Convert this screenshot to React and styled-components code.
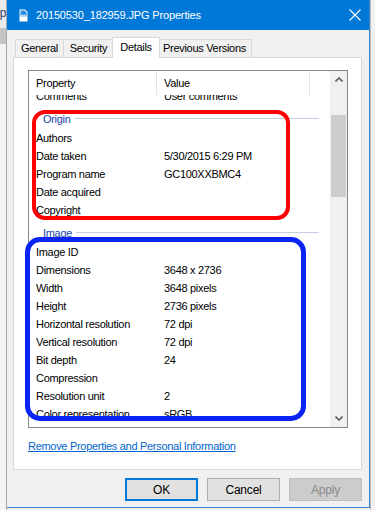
import React from "react";
import styled, { createGlobalStyle } from "styled-components";

const GlobalStyle = createGlobalStyle`
  body {
    margin: 0;
    background: #f0f0f0;
    font-family: "Liberation Sans", Arial, sans-serif;
    font-size: 11px;
    letter-spacing: -0.3px;
    color: #000;
  }
`;

const Screen = styled.div`
  display: flex;
  width: 375px;
  height: 510px;
  overflow: hidden;
`;

const Backdrop = styled.div`
  width: 7px;
  display: flex;
  flex-direction: column;
  border-right: 1px solid #a9a9a9;
  box-sizing: border-box;
`;

const BackdropTop = styled.div`
  height: 28px;
  background: #ebebeb;
  overflow: hidden;
  direction: rtl;
  font-size: 12px;
  line-height: 26px;
  color: #3b3b6e;
`;

const BackdropBar = styled.div`
  height: 16px;
  background: #c4c4c4;
`;

const BackdropRest = styled.div`
  flex: 1;
  background: #f4f4f4;
`;

const RightEdge = styled.div`
  flex: 1;
  background: #f2f2f2;
  border-left: 1px solid #b8b8b8;
`;

const Window = styled.div`
  width: 363px;
  height: 508px;
  box-sizing: border-box;
  border: 1px solid #3b87cf;
  border-top: none;
  border-left: none;
  display: flex;
  flex-direction: column;
  background: #f0f0f0;
`;

const TitleBar = styled.div`
  height: 30px;
  background: #0078d7;
  display: flex;
  align-items: center;
  padding: 0 8px 0 12px;
  color: #fff;
`;

const Title = styled.div`
  margin-left: 8px;
  flex: 1;
  font-size: 11px;
  letter-spacing: -0.15px;
`;

const Body = styled.div`
  flex: 1;
  display: flex;
  flex-direction: column;
  padding: 7px 7px 0 6px;
`;

const TabRow = styled.div`
  display: flex;
  align-items: flex-end;
  height: 20px;
  padding-left: 2px;
  position: relative;
  z-index: 1;
`;

const Tab = styled.div`
  box-sizing: border-box;
  width: ${(p) => p.$w}px;
  height: ${(p) => (p.$active ? 21 : 18)}px;
  margin: 0 ${(p) => (p.$active ? -2 : 0)}px ${(p) => (p.$active ? -1 : 0)}px
    ${(p) => (p.$active ? -2 : -1)}px;
  background: ${(p) => (p.$active ? "#fff" : "#f0f0f0")};
  border: 1px solid #d9d9d9;
  border-bottom: none;
  position: relative;
  z-index: ${(p) => (p.$active ? 2 : 1)};
  display: flex;
  justify-content: center;
  padding-top: ${(p) => (p.$active ? 2 : 1)}px;
  line-height: 14px;

  &:first-child {
    margin-left: 0;
  }
`;

const Panel = styled.div`
  position: relative;
  height: 413px;
  box-sizing: border-box;
  border: 1px solid #d9d9d9;
  background: #fff;
  padding: 12px 13px 0 14px;
  display: flex;
  flex-direction: column;
`;

const List = styled.div`
  height: 358px;
  box-sizing: border-box;
  border: 1px solid #828790;
  display: flex;
`;

const ListContent = styled.div`
  flex: 1;
  display: flex;
  flex-direction: column;
  overflow: hidden;
`;

const Header = styled.div`
  height: 24px;
  display: flex;
  flex-shrink: 0;
`;

const HeaderCell = styled.div`
  width: ${(p) => (p.$w ? `${p.$w}px` : "auto")};
  flex: ${(p) => (p.$w ? "none" : 1)};
  box-sizing: border-box;
  padding-left: 7px;
  line-height: 24px;
  border-right: ${(p) => (p.$w ? "1px solid #e5e5e5" : "none")};
`;

const RowsViewport = styled.div`
  flex: 1;
  overflow: hidden;
`;

const Rows = styled.div`
  margin-top: -8px;
`;

const Row = styled.div`
  height: 18px;
  display: flex;
  align-items: center;
  white-space: nowrap;
`;

const Label = styled.div`
  width: 128px;
  box-sizing: border-box;
  padding-left: 7px;
`;

const Value = styled.div`
  padding-left: 7px;
`;

const GroupHeader = styled.div`
  height: 24px;
  box-sizing: border-box;
  padding: 3px 11px 0 14px;
  display: flex;
  align-items: center;
  gap: 4px;
  color: #2446a8;
`;

const GroupLine = styled.div`
  flex: 1;
  height: 1px;
  background: #c3cde3;
`;

const Scrollbar = styled.div`
  width: 17px;
  background: #f0f0f0;
  display: flex;
  flex-direction: column;
`;

const Arrow = styled.div`
  height: 17px;
  display: flex;
  align-items: center;
  justify-content: center;
`;

const Thumb = styled.div`
  height: 82px;
  margin: 27px 1px 0;
  background: #cdcdcd;
`;

const Spacer = styled.div`
  flex: 1;
`;

const Link = styled.a`
  margin-top: 11px;
  align-self: flex-start;
  color: #0066cc;
  text-decoration: underline;
  font-size: 11px;
  line-height: 14px;
  cursor: pointer;
`;

const Buttons = styled.div`
  display: flex;
  justify-content: flex-end;
  gap: 9px;
  margin-top: 8px;
`;

const Button = styled.button`
  width: 73px;
  height: 23px;
  box-sizing: border-box;
  font-family: inherit;
  font-size: 12px;
  letter-spacing: -0.2px;
  padding: 0;
  background: ${(p) => (p.disabled ? "#cccccc" : "#e1e1e1")};
  color: ${(p) => (p.disabled ? "#8a8a8a" : "#000")};
  border: ${(p) =>
    p.$primary ? "2px solid #0078d7" : p.disabled ? "1px solid #bfbfbf" : "1px solid #adadad"};
`;

const Annotation = styled.div`
  position: absolute;
  left: ${(p) => p.$x}px;
  top: ${(p) => p.$y}px;
  width: ${(p) => p.$w}px;
  height: ${(p) => p.$h}px;
  box-sizing: border-box;
  border: ${(p) => p.$stroke}px solid ${(p) => p.$color};
  border-radius: ${(p) => p.$r}px;
  pointer-events: none;
`;

const FileIcon = () => (
  <svg width="9" height="13" viewBox="0 0 9 13">
    <path d="M0.5 0.5 H6 L8.5 3 V12.5 H0.5 Z" fill="#fff" />
    <path d="M1.5 1.5 H5.5 L7.5 3.5 V7.5 H1.5 Z" fill="#2a8ae0" />
    <path d="M1.5 7.5 L3 5 L4.3 6.6 L5.5 5.2 L7.5 7.5 Z" fill="#cfe6fb" />
  </svg>
);

const CloseIcon = () => (
  <svg width="12" height="12" viewBox="0 0 12 12">
    <path d="M0.5 0.5 L11.5 11.5 M11.5 0.5 L0.5 11.5" stroke="#fff" strokeWidth="1.1" />
  </svg>
);

const Chevron = ({ up }) => (
  <svg width="8" height="5" viewBox="0 0 8 5">
    <polyline
      points={up ? "0.5,4.5 4,1 7.5,4.5" : "0.5,0.5 4,4 7.5,0.5"}
      fill="none"
      stroke="#606060"
      strokeWidth="1.6"
    />
  </svg>
);

const origin = [
  ["Authors", ""],
  ["Date taken", "5/30/2015 6:29 PM"],
  ["Program name", "GC100XXBMC4"],
  ["Date acquired", ""],
  ["Copyright", ""],
];

const image = [
  ["Image ID", ""],
  ["Dimensions", "3648 x 2736"],
  ["Width", "3648 pixels"],
  ["Height", "2736 pixels"],
  ["Horizontal resolution", "72 dpi"],
  ["Vertical resolution", "72 dpi"],
  ["Bit depth", "24"],
  ["Compression", ""],
  ["Resolution unit", "2"],
  ["Color representation", "sRGB"],
];

const tabs = [
  ["General", 49],
  ["Security", 51],
  ["Details", 48, true],
  ["Previous Versions", 95],
];

export default function App() {
  return (
    <>
      <GlobalStyle />
      <Screen>
        <Backdrop>
          <BackdropTop>p.</BackdropTop>
          <BackdropBar />
          <BackdropRest />
        </Backdrop>
        <Window>
          <TitleBar>
            <FileIcon />
            <Title>20150530_182959.JPG Properties</Title>
            <CloseIcon />
          </TitleBar>
          <Body>
            <TabRow>
              {tabs.map(([name, w, active]) => (
                <Tab key={name} $w={w} $active={active}>
                  {name}
                </Tab>
              ))}
            </TabRow>
            <Panel>
              <List>
                <ListContent>
                  <Header>
                    <HeaderCell $w={128}>Property</HeaderCell>
                    <HeaderCell $w={153}>Value</HeaderCell>
                    <HeaderCell />
                  </Header>
                  <RowsViewport>
                    <Rows>
                      <Row>
                        <Label>Comments</Label>
                        <Value>User comments</Value>
                      </Row>
                      <GroupHeader>
                        Origin
                        <GroupLine />
                      </GroupHeader>
                      {origin.map(([k, v]) => (
                        <Row key={k}>
                          <Label>{k}</Label>
                          <Value>{v}</Value>
                        </Row>
                      ))}
                      <GroupHeader>
                        Image
                        <GroupLine />
                      </GroupHeader>
                      {image.map(([k, v]) => (
                        <Row key={k}>
                          <Label>{k}</Label>
                          <Value>{v}</Value>
                        </Row>
                      ))}
                    </Rows>
                  </RowsViewport>
                </ListContent>
                <Scrollbar>
                  <Arrow>
                    <Chevron up />
                  </Arrow>
                  <Thumb />
                  <Spacer />
                  <Arrow>
                    <Chevron />
                  </Arrow>
                </Scrollbar>
              </List>
              <Link>Remove Properties and Personal Information</Link>
              <Annotation $x={18} $y={52} $w={258} $h={110} $stroke={4} $color="#ff0000" $r={13} />
              <Annotation $x={11} $y={179} $w={281} $h={184} $stroke={5} $color="#0a24f5" $r={15} />
            </Panel>
            <Buttons>
              <Button $primary>OK</Button>
              <Button>Cancel</Button>
              <Button disabled>Apply</Button>
            </Buttons>
          </Body>
        </Window>
        <RightEdge />
      </Screen>
    </>
  );
}
